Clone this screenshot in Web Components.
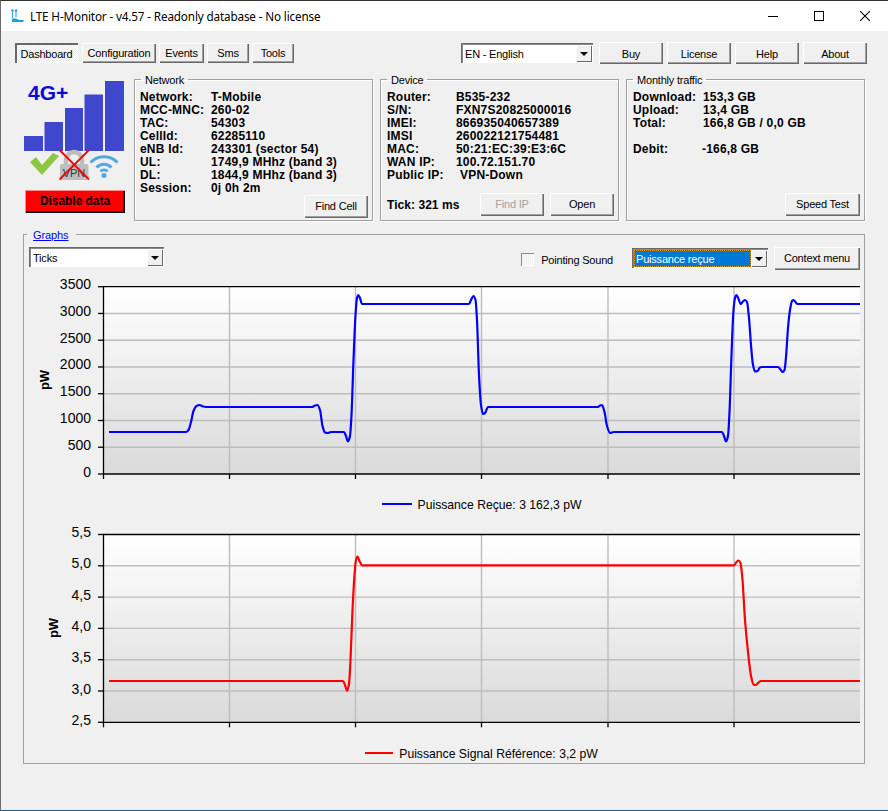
<!DOCTYPE html>
<html>
<head>
<meta charset="utf-8">
<title>LTE H-Monitor</title>
<style>
    html, body { margin: 0; height: 100%; background: #f0f0f0; overflow: hidden; }
    body { font: 12px "Liberation Sans", Arial, sans-serif; color: #000; }
</style>
</head>
<body>
<lte-window>
    <lte-titlebar>LTE H-Monitor - v4.57 - Readonly database - No license</lte-titlebar>

    <lte-toolbar>
        <lte-button slot="tabs" w="63" h="20" pressed>Dashboard</lte-button>
        <lte-button slot="tabs" w="74" h="20" style="margin-left:4px">Configuration</lte-button>
        <lte-button slot="tabs" w="45" h="20" style="margin-left:3px">Events</lte-button>
        <lte-button slot="tabs" w="42" h="20" style="margin-left:3px">Sms</lte-button>
        <lte-button slot="tabs" w="42" h="20" style="margin-left:3px">Tools</lte-button>
        <lte-select slot="actions" w="132" style="margin-right:6px">EN - English</lte-select>
        <lte-button slot="actions" w="64" h="22" style="margin-right:4px">Buy</lte-button>
        <lte-button slot="actions" w="64" h="22" style="margin-right:4px">License</lte-button>
        <lte-button slot="actions" w="64" h="22" style="margin-right:4px">Help</lte-button>
        <lte-button slot="actions" w="64" h="22">About</lte-button>
    </lte-toolbar>

    <lte-panels>
        <lte-signal></lte-signal>

        <lte-group style="width:239px;height:150px">
            <span slot="legend">Network</span>
            <lte-info style="--col:71px">
                <span>Network:</span><span>T-Mobile</span>
                <span>MCC-MNC:</span><span>260-02</span>
                <span>TAC:</span><span>54303</span>
                <span>CellId:</span><span>62285110</span>
                <span>eNB Id:</span><span>243301 (sector 54)</span>
                <span>UL:</span><span>1749,9 MHhz (band 3)</span>
                <span>DL:</span><span>1844,9 MHhz (band 3)</span>
                <span>Session:</span><span>0j 0h 2m</span>
            </lte-info>
            <lte-footer slot="footer">
                <lte-button w="64" h="23">Find Cell</lte-button>
            </lte-footer>
        </lte-group>

        <lte-group style="width:239px;height:150px;margin-left:7px">
            <span slot="legend">Device</span>
            <lte-info style="--col:69px;margin-left:1px">
                <span>Router:</span><span>B535-232</span>
                <span>S/N:</span><span>FXN7S20825000016</span>
                <span>IMEI:</span><span>866935040657389</span>
                <span>IMSI</span><span>260022121754481</span>
                <span>MAC:</span><span>50:21:EC:39:E3:6C</span>
                <span>WAN IP:</span><span>100.72.151.70</span>
                <span>Public IP:</span><span style="padding-left:4px">VPN-Down</span>
            </lte-info>
            <lte-footer slot="footer">
                <b style="margin:0 auto 0 1px;font-size:12px;letter-spacing:.05px;align-self:center">Tick: 321 ms</b>
                <lte-button w="64" h="23" disabled>Find IP</lte-button>
                <lte-button w="64" h="23" style="margin-left:6px">Open</lte-button>
            </lte-footer>
        </lte-group>

        <lte-group style="width:239px;height:150px;margin-left:7px">
            <span slot="legend">Monthly traffic</span>
            <lte-info style="--col:70px;margin-left:1px">
                <span>Download:</span><span>153,3 GB</span>
                <span>Upload:</span><span>13,4 GB</span>
                <span>Total:</span><span>166,8 GB / 0,0 GB</span>
                <span>&nbsp;</span><span>&nbsp;</span>
                <span>Debit:</span><span style="margin-left:-1px">-166,8 GB</span>
            </lte-info>
            <lte-footer slot="footer">
                <lte-button w="75" h="23">Speed Test</lte-button>
            </lte-footer>
        </lte-group>
    </lte-panels>

    <lte-graphs>
        <lte-select slot="left" w="135">Ticks</lte-select>
        <lte-check slot="right" style="margin:6px 19px 0 0">Pointing Sound</lte-check>
        <lte-select slot="right" w="136" selected style="margin:1px 6px 0 0">Puissance reçue</lte-select>
        <lte-button slot="right" w="86" h="23">Context menu</lte-button>

        <lte-chart slot="charts" top="275" bottom="482" plot-top="286.7" plot-bottom="474"
            labels="3500,3000,2500,2000,1500,1000,500,0" unit-x="44" unit-y="380"
            color="#0000ff" legend-h="43" legend-line="30"
            points="109,432 186,432 188.5,430 191,422 193.5,411 196.5,406 199.5,405 203,406.5 206,407 312,407 315,405.5 317.5,405 320,410 322.5,426 325,432.5 328,433 331,432 344,432 346,436 348,441.5 350,436 351.5,415 353.5,360 355.5,315 357,298 358.2,295 360,298 362,304 469,304 471,300 473.5,296 475.5,300 477,320 479,375 481,405 483,414 485,413 488,407 598,407 600,405.5 602,405 604.5,412 607,426 610,433 614,432 722,432 724,436 726,441.5 728,436 729.5,412 731.5,355 733.5,310 735,298 736.2,295 738,297.5 740.7,304 743,301.5 745,300 747,302 749,318 751,345 753,365 755,371.5 757.5,371 760,367.5 762,367 778,367 780.5,369.5 782.7,372 784.5,370 786,357 788,328 790,310 792,301 793.5,300 795.5,302 797.5,304 860,304">
            Puissance Reçue: 3 162,3 pW
        </lte-chart>
        <lte-chart slot="charts" top="525" bottom="730" plot-top="534.5" plot-bottom="722.3"
            labels="5,5|5,0|4,5|4,0|3,5|3,0|2,5" unit-x="53" unit-y="628"
            color="#ff0000" legend-h="32" legend-line="28" legend-pad="14"
            points="109,681 343,681 345,685 347,690.7 349,684 350.5,660 352.5,610 354.5,575 356,560 357.5,556.7 359.5,561 362,565.3 734,565.3 736.5,562 738.5,560.5 740.5,563 742.5,580 745,620 748,652 751,676 753.5,684.5 756,685 758.5,682.5 761,681 860,681">
            Puissance Signal Référence: 3,2 pW
        </lte-chart>
    </lte-graphs>
</lte-window>

<script>
const UI_FONT = '11px "Liberation Sans", sans-serif';

class LteWindow extends HTMLElement {
    constructor() {
        super();
        this.attachShadow({ mode: 'open' }).innerHTML = `
            <style>
                :host {
                    display: flex;
                    flex-direction: column;
                    box-sizing: border-box;
                    width: 888px;
                    height: 811px;
                    background: #f0f0f0;
                    border-top: 1px solid #333;
                    border-bottom: 1px solid #2a5578;
                    border-left: 1px solid #6a6a6a;
                }
            </style>
            <slot></slot>`;
    }
}

class LteTitlebar extends HTMLElement {
    constructor() {
        super();
        this.attachShadow({ mode: 'open' }).innerHTML = `
            <style>
                :host {
                    display: flex;
                    align-items: center;
                    height: 30px;
                    background: #fff;
                    font: 11.7px "Noto Sans", "Open Sans", sans-serif;
                }
                svg { display: block; }
                .icon { margin: 0 6px 0 10px; }
                .text { flex: 1; letter-spacing: -.14px; padding-bottom: 1px; }
                .ctl { width: 46px; height: 30px; display: flex; align-items: center; justify-content: center; }
            </style>
            <svg class="icon" width="13" height="14" viewBox="0 0 13 14" fill="none">
                <path d="M1.5 2v7M5 2v6" stroke="#35b6e6" stroke-width="1.2"/>
                <circle cx="1.500" cy="1.500" r="1.200" fill="#1c9fd8"/>
                <circle cx="5" cy="1.500" r="1.200" fill="#1c9fd8"/>
                <path d="M1 9.500h4l3 1.500h4.500v2H1z" fill="#1c9fd8"/>
            </svg>
            <span class="text"><slot></slot></span>
            <div class="ctl"><svg width="10" height="10"><path d="M0 5.500h10" stroke="#000"/></svg></div>
            <div class="ctl"><svg width="10" height="10"><rect x=".5" y=".5" width="9" height="9" fill="none" stroke="#000"/></svg></div>
            <div class="ctl"><svg width="10" height="10"><path d="M0 0l10 10M10 0L0 10" stroke="#000" stroke-width="1.05"/></svg></div>`;
    }
}

class LteToolbar extends HTMLElement {
    constructor() {
        super();
        this.attachShadow({ mode: 'open' }).innerHTML = `
            <style>
                :host {
                    display: flex;
                    align-items: center;
                    justify-content: space-between;
                    height: 22px;
                    margin-top: 11px;
                    padding: 0 21px 0 14px;
                }
                div { display: flex; align-items: center; }
            </style>
            <div><slot name="tabs"></slot></div>
            <div><slot name="actions"></slot></div>`;
    }
}

class LteButton extends HTMLElement {
    constructor() {
        super();
        const w = this.getAttribute('w');
        const h = this.getAttribute('h');
        this.attachShadow({ mode: 'open' }).innerHTML = `
            <style>
                :host {
                    display: inline-flex;
                    align-items: center;
                    justify-content: center;
                    box-sizing: border-box;
                    flex: none;
                    width: ${w}px;
                    height: ${h}px;
                    padding-bottom: 1px;
                    font: ${UI_FONT};
                    letter-spacing: -.2px;
                    color: #000;
                    background: #f0f0f0;
                    box-shadow: inset 1px 1px 0 #fff, inset -1px -1px 0 #696969, inset -2px -2px 0 #a0a0a0;
                }
                :host([h="22"]) { padding: 1px 0 0; }
                :host([disabled]) { color: #a0a0a0; }
                :host([pressed]) {
                    background: repeating-conic-gradient(#fff 0 25%, #ececec 0 50%) 0 0 / 2px 2px;
                    box-shadow: inset 2px 2px 0 #696969, inset -1px -1px 0 #fff;
                    padding-top: 2px;
                }
                :host([danger]) {
                    background: #f00;
                    box-shadow: inset 1px 1px 0 #ff8a8a, inset -1px -1px 0 #000, inset -2px -2px 0 #700;
                    font-size: 11.9px;
                    font-weight: bold;
                    letter-spacing: 0;
                }
            </style>
            <slot></slot>`;
    }
}

class LteSelect extends HTMLElement {
    constructor() {
        super();
        const w = this.getAttribute('w');
        this.attachShadow({ mode: 'open' }).innerHTML = `
            <style>
                :host {
                    display: flex;
                    box-sizing: border-box;
                    flex: none;
                    width: ${w}px;
                    height: 20px;
                    padding: 2px 1px 1px 2px;
                    background: #fff;
                    box-shadow: inset 1px 1px 0 #696969, inset 2px 2px 0 #8a8a8a;
                    font: ${UI_FONT};
                    letter-spacing: -.2px;
                    color: #000;
                }
                .value {
                    flex: 1;
                    display: flex;
                    align-items: center;
                    padding-left: 2px;
                    white-space: nowrap;
                }
                :host([selected]) .value {
                    background: #0078d7;
                    color: #fff;
                    outline: 1px dotted #d9972b;
                    outline-offset: -1px;
                }
                .arrow {
                    flex: none;
                    width: 16px;
                    display: flex;
                    align-items: center;
                    justify-content: center;
                    background: #f0f0f0;
                    box-shadow: inset 1px 1px 0 #fff, inset -1px -1px 0 #696969;
                }
                .arrow::before {
                    content: "";
                    border: 4px solid transparent;
                    border-top: 4px solid #000;
                    border-bottom: 0;
                }
            </style>
            <div class="value"><slot></slot></div>
            <div class="arrow"></div>`;
    }
}

class LtePanels extends HTMLElement {
    constructor() {
        super();
        this.attachShadow({ mode: 'open' }).innerHTML = `
            <style>
                :host { display: flex; margin-top: 7px; padding-left: 14px; }
            </style>
            <slot></slot>`;
    }
}

class LteGroup extends HTMLElement {
    constructor() {
        super();
        this.attachShadow({ mode: 'open' }).innerHTML = `
            <style>
                :host { display: block; flex: none; box-sizing: border-box; }
                fieldset {
                    box-sizing: border-box;
                    display: flex;
                    flex-direction: column;
                    height: 100%;
                    margin: 0;
                    padding: 4px 4px 4px 5px;
                    border: 1px solid #a0a0a0;
                    box-shadow: 1px 1px 0 #fff, inset 1px 1px 0 #fff;
                    min-width: 0;
                }
                legend {
                    margin-left: 1px;
                    padding: 2px 4px 0;
                    font: ${UI_FONT};
                    line-height: 14px;
                    letter-spacing: -.2px;
                }
                .footer { margin-top: auto; }
            </style>
            <fieldset>
                <legend><slot name="legend"></slot></legend>
                <slot></slot>
                <div class="footer"><slot name="footer"></slot></div>
            </fieldset>`;
    }
}

class LteInfo extends HTMLElement {
    constructor() {
        super();
        this.attachShadow({ mode: 'open' }).innerHTML = `
            <style>
                :host {
                    display: grid;
                    grid-template-columns: var(--col) 1fr;
                    grid-auto-rows: 13px;
                    font: bold 12px/13px "Liberation Sans", sans-serif;
                    letter-spacing: .2px;
                    white-space: nowrap;
                }
            </style>
            <slot></slot>`;
    }
}

class LteFooter extends HTMLElement {
    constructor() {
        super();
        this.attachShadow({ mode: 'open' }).innerHTML = `
            <style>
                :host { display: flex; justify-content: flex-end; }
            </style>
            <slot></slot>`;
    }
}

class LteSignal extends HTMLElement {
    constructor() {
        super();
        this.attachShadow({ mode: 'open' }).innerHTML = `
            <style>
                :host { display: block; flex: none; width: 119px; height: 150px; padding-top: 1px; box-sizing: border-box; }
                svg { display: block; }
                lte-button { margin-left: 10px; }
            </style>
            <svg width="119" height="118" viewBox="15 72 119 118" font-family="Liberation Sans, sans-serif">
                <g fill="#3f48cc">
                    <rect x="24" y="136" width="19" height="15"/>
                    <rect x="44.500" y="122" width="18.500" height="29"/>
                    <rect x="65" y="108" width="18" height="43"/>
                    <rect x="84.500" y="94.500" width="18.500" height="56.500"/>
                    <rect x="105" y="81" width="19" height="70"/>
                </g>
                <text x="28" y="100" font-size="21" font-weight="bold" fill="#0a0ad2">4G+</text>
                <path d="M30 162l6-5 6 8 11-12 6 3-17 19z" fill="#8dc63f"/>
                <path d="M66 165v-5a8 8 0 0 1 16 0v5" fill="none" stroke="#bdbdbd" stroke-width="4.500"/>
                <rect x="60" y="164" width="28.500" height="16" rx="2" fill="#bdbdbd"/>
                <text x="74" y="176.500" font-size="11" text-anchor="middle" fill="#333">VPN</text>
                <path d="M59.500 150l29.500 29.500M89 150l-29.500 29.500" stroke="#f00" stroke-width="1.800"/>
                <g fill="none" stroke="#4fa9e0" stroke-width="3">
                    <path d="M90.500 162.500A19 19 0 0 1 117.500 162.500"/>
                    <path d="M96.500 167.500A10.500 10.500 0 0 1 111.500 167.500"/>
                    <path d="M100.500 171.500A5 5 0 0 1 107.500 171.500"/>
                </g>
                <circle cx="104" cy="175.500" r="2.500" fill="#4fa9e0"/>
            </svg>
            <lte-button w="100" h="23" danger>Disable data</lte-button>`;
    }
}

class LteGraphs extends HTMLElement {
    constructor() {
        super();
        this.attachShadow({ mode: 'open' }).innerHTML = `
            <style>
                :host { display: block; margin: 5px 0 0 22px; width: 842px; height: 538px; }
                fieldset {
                    box-sizing: border-box;
                    height: 100%;
                    margin: 0;
                    padding: 5px 4px 0 5px;
                    border: 1px solid #a0a0a0;
                    min-width: 0;
                }
                legend {
                    margin-left: -2px;
                    padding: 2px 8px 0 6px;
                    font: ${UI_FONT};
                    line-height: 14px;
                    letter-spacing: -.1px;
                }
                a { color: #00f; }
                .bar { display: flex; justify-content: space-between; height: 28px; }
                .bar div { display: flex; align-items: flex-start; }
            </style>
            <fieldset>
                <legend><a href="#">Graphs</a></legend>
                <div class="bar">
                    <div><slot name="left"></slot></div>
                    <div><slot name="right"></slot></div>
                </div>
                <slot name="charts"></slot>
            </fieldset>`;
    }
}

class LteCheck extends HTMLElement {
    constructor() {
        super();
        this.attachShadow({ mode: 'open' }).innerHTML = `
            <style>
                :host {
                    display: flex;
                    align-items: center;
                    height: 13px;
                    font: ${UI_FONT};
                    letter-spacing: -.2px;
                }
                i {
                    box-sizing: border-box;
                    width: 13px;
                    height: 13px;
                    margin-right: 7px;
                    background: #f4f4f4;
                    box-shadow: inset 1px 1px 0 #8a8a8a, inset -1px -1px 0 #fff;
                }
            </style>
            <i></i><span><slot></slot></span>`;
    }
}

class LteChart extends HTMLElement {

    constructor() {
        super();
        this.attachShadow({ mode: 'open' });
        this.render();
    }

    /**
     * Monotone cubic line through the points, so long flats stay flat
     */
    linePath(pts) {
        const n = pts.length;
        const h = [], s = [], m = [];
        for (let i = 0; i < n - 1; i++) {
            h[i] = pts[i + 1][0] - pts[i][0];
            s[i] = (pts[i + 1][1] - pts[i][1]) / h[i];
        }
        m[0] = s[0];
        m[n - 1] = s[n - 2];
        for (let i = 1; i < n - 1; i++) {
            if (s[i - 1] * s[i] <= 0) {
                m[i] = 0;
            } else {
                const w1 = 2 * h[i] + h[i - 1];
                const w2 = h[i] + 2 * h[i - 1];
                m[i] = (w1 + w2) / (w1 / s[i - 1] + w2 / s[i]);
            }
        }
        let d = `M${pts[0][0]} ${pts[0][1]}`;
        for (let i = 0; i < n - 1; i++) {
            const c = h[i] / 3;
            d += `C${(pts[i][0] + c).toFixed(2)} ${(pts[i][1] + m[i] * c).toFixed(2)} `
               + `${(pts[i + 1][0] - c).toFixed(2)} ${(pts[i + 1][1] - m[i + 1] * c).toFixed(2)} `
               + `${pts[i + 1][0]} ${pts[i + 1][1]}`;
        }
        return d;
    }

    render() {
        const top = +this.getAttribute('top');
        const bottom = +this.getAttribute('bottom');
        const pt = +this.getAttribute('plot-top');
        const pb = +this.getAttribute('plot-bottom');
        const raw = this.getAttribute('labels');
        const labels = raw.includes('|') ? raw.split('|') : raw.split(',');
        const color = this.getAttribute('color');
        const pts = this.getAttribute('points').split(' ').map(p => p.split(',').map(Number));
        const left = 103.5, right = 860;
        const stepY = (pb - pt) / (labels.length - 1);
        const id = 'g' + top;

        const ys = labels.map((_, i) => pt + i * stepY);
        const xs = [229.5, 355.5, 481.5, 608, 734];

        const hGrid = ys.slice(1, -1).map(y => `<path d="M${left} ${y}H${right}"/>`).join('');
        const vGrid = xs.map(x => `<path d="M${x} ${pt}V${pb}"/>`).join('');
        const yTicks = ys.map(y => `<path d="M98 ${y}H${left}"/>`).join('');
        const xTicks = [left, ...xs].map(x => `<path d="M${x} ${pb}V${pb + 5}"/>`).join('');
        const yText = labels.map((l, i) => `<text x="91" y="${ys[i] + 2.5}" text-anchor="end" font-size="14">${l}</text>`).join('');
        const ux = this.getAttribute('unit-x');
        const uy = this.getAttribute('unit-y');

        this.shadowRoot.innerHTML = `
            <style>
                :host { display: block; font: 12.2px "Liberation Sans", sans-serif; }
                svg { display: block; }
                .legend {
                    display: flex;
                    align-items: center;
                    justify-content: center;
                    height: ${this.getAttribute('legend-h')}px;
                    padding: ${this.getAttribute('legend-pad') || 0}px 0 0 74px;
                    box-sizing: border-box;
                }
                .legend i {
                    width: ${this.getAttribute('legend-line')}px;
                    height: 2px;
                    margin-right: 6px;
                    background: ${color};
                }
                .legend span { margin-top: 2px; }
            </style>
            <svg width="831" height="${bottom - top}" viewBox="29 ${top} 831 ${bottom - top}" font-family="Liberation Sans, sans-serif">
                <defs>
                    <linearGradient id="${id}" x1="0" y1="0" x2="0" y2="1">
                        <stop offset="0" stop-color="#fff"/>
                        <stop offset="1" stop-color="#dadada"/>
                    </linearGradient>
                </defs>
                <rect x="${left}" y="${pt}" width="${right - left}" height="${pb - pt}" fill="url(#${id})"/>
                <g stroke="#bdbdbd" stroke-width="1.4" fill="none">${hGrid}${vGrid}</g>
                <path d="${this.linePath(pts)}" fill="none" stroke="${color}" stroke-width="2.2" stroke-linejoin="round"/>
                <g stroke="#000" stroke-width="1.3" fill="none">
                    <path d="M${left} ${pb}V${pt}H${right}M${left} ${pb}H${right}"/>
                    ${yTicks}${xTicks}
                </g>
                ${yText}
                <text transform="translate(${ux} ${uy}) rotate(-90)" text-anchor="middle" font-size="13" font-weight="bold" dy="4.500">pW</text>
            </svg>
            <div class="legend"><i></i><span><slot></slot></span></div>`;
    }
}

customElements.define('lte-window', LteWindow);
customElements.define('lte-titlebar', LteTitlebar);
customElements.define('lte-toolbar', LteToolbar);
customElements.define('lte-button', LteButton);
customElements.define('lte-select', LteSelect);
customElements.define('lte-panels', LtePanels);
customElements.define('lte-group', LteGroup);
customElements.define('lte-info', LteInfo);
customElements.define('lte-footer', LteFooter);
customElements.define('lte-signal', LteSignal);
customElements.define('lte-graphs', LteGraphs);
customElements.define('lte-check', LteCheck);
customElements.define('lte-chart', LteChart);
</script>
</body>
</html>
